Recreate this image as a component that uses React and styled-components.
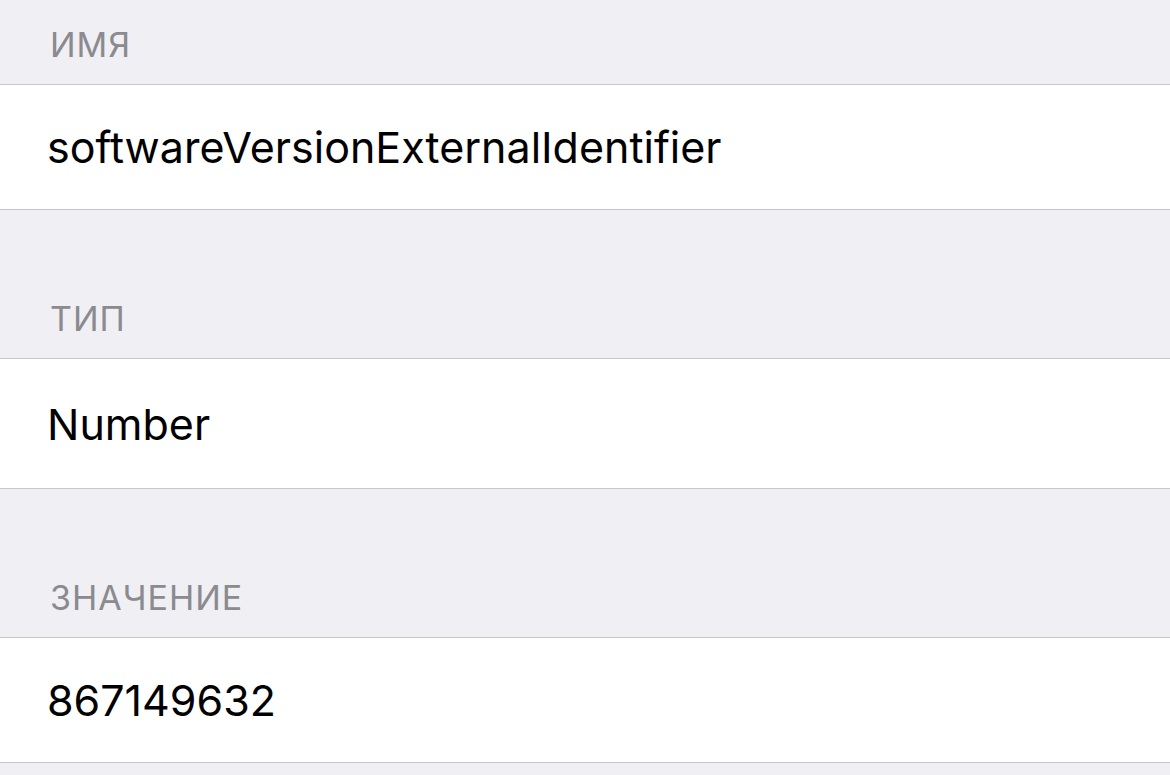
import React from "react"
import styled, { createGlobalStyle } from "styled-components"

const GlobalStyle = createGlobalStyle`
  html, body {
    margin: 0;
    padding: 0;
    background: #efeff4;
  }
  body {
    font-family: Inter, "Liberation Sans", Arial, sans-serif;
    -webkit-font-smoothing: antialiased;
  }
`

const Page = styled.div`
  width: 1170px;
  height: 775px;
  overflow: hidden;
  background: #efeff4;
`

const Section = styled.section`
  display: flex;
  flex-direction: column;
  padding-top: ${(p) => (p.$first ? "25px" : "89px")};
`

const Header = styled.div`
  padding: 0 0 19px 50px;
  height: 40px;
  line-height: 40px;
  font-size: 34px;
  letter-spacing: 1px;
  color: #8a8a8f;
  text-transform: uppercase;
`

const Row = styled.div`
  display: flex;
  align-items: center;
  height: ${(p) => p.$height}px;
  padding-left: 47px;
  background: #fff;
  border-top: 1px solid #c8c7cc;
  border-bottom: 1px solid #c8c7cc;
  font-size: 43px;
  color: #000;
`

const fields = [
  { label: "Имя", value: "softwareVersionExternalIdentifier", height: 124 },
  { label: "Тип", value: "Number", height: 129 },
  { label: "Значение", value: "867149632", height: 124 },
]

export default function App() {
  return (
    <Page>
      <GlobalStyle />
      {fields.map((f, i) => (
        <Section key={f.label} $first={i === 0}>
          <Header>{f.label}</Header>
          <Row $height={f.height}>{f.value}</Row>
        </Section>
      ))}
    </Page>
  )
}
